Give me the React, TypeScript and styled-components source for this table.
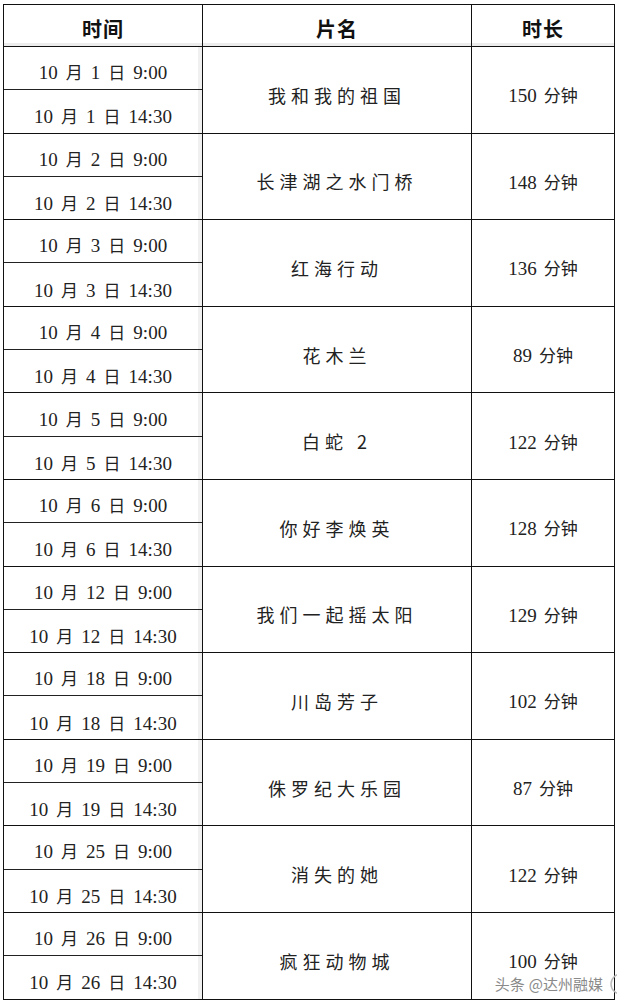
import React, { FC } from "react";
import styled, { createGlobalStyle } from "styled-components";

const GlobalStyle = createGlobalStyle`
  html, body {
    margin: 0;
    padding: 0;
    background: #ffffff;
  }
  body {
    font-family: "Liberation Serif", "Noto Sans CJK SC", serif;
    color: #222;
  }
`;

const Page = styled.div`
  position: relative;
  width: 617px;
  height: 1004px;
  padding: 4px 0 0 3px;
  box-sizing: border-box;
  overflow: hidden;
`;

const Table = styled.table`
  border-collapse: collapse;
  table-layout: fixed;
  width: 611px;
  border: 1.5px solid #111;
`;

const Col = styled.col<{ w: number }>`
  width: ${(p) => p.w}px;
`;

const HeadCell = styled.th`
  height: 42px;
  padding: 6px 0 0;
  box-sizing: border-box;
  border: 1px solid #111;
  box-shadow: inset 0 -3px 0 #ececec;
  font-family: "Noto Sans CJK SC", sans-serif;
  font-weight: 700;
  font-size: 20px;
  letter-spacing: 1px;
  color: #111;
  text-align: center;
  vertical-align: middle;
`;

const TimeCell = styled.td<{ first: boolean }>`
  height: 43.3px;
  padding: ${(p) => (p.first ? "7px" : "9px")} 0 0;
  box-sizing: border-box;
  border-left: 1px solid #111;
  border-right: 1px solid #111;
  border-top: 1px solid ${(p) => (p.first ? "#111" : "#222")};
  box-shadow: inset -4px 0 0 #f0f0f0;
  font-size: 19px;
  text-align: center;
  vertical-align: middle;
  white-space: nowrap;
`;

const Gap = styled.span<{ w?: number }>`
  display: inline-block;
  width: ${(p) => p.w ?? 8}px;
`;

const Cjk = styled.span`
  font-family: "Noto Sans CJK SC", sans-serif;
  font-size: 17px;
`;

const NameCell = styled.td`
  padding: 10px 0 0;
  border: 1px solid #111;
  font-family: "Noto Sans CJK SC", sans-serif;
  font-size: 18px;
  letter-spacing: 5px;
  text-align: center;
  vertical-align: middle;
`;

const DurCell = styled.td`
  padding: 10px 0 0;
  border: 1px solid #111;
  font-size: 19px;
  text-align: center;
  vertical-align: middle;
  white-space: nowrap;
`;

const Watermark = styled.div`
  position: absolute;
  right: 14px;
  bottom: 10px;
  display: flex;
  align-items: center;
  gap: 4px;
  font-family: "Noto Sans CJK SC", sans-serif;
  font-size: 15px;
  color: #8a8a8a;
  text-shadow: 0 0 2px #fff, 0 0 2px #fff;
`;

const Ring = styled.svg`
  position: absolute;
  right: -8px;
  bottom: 8px;
`;

interface Show {
  day: number;
  title: string;
  minutes: number;
}

const shows: Show[] = [
  { day: 1, title: "我和我的祖国", minutes: 150 },
  { day: 2, title: "长津湖之水门桥", minutes: 148 },
  { day: 3, title: "红海行动", minutes: 136 },
  { day: 4, title: "花木兰", minutes: 89 },
  { day: 5, title: "白蛇 2", minutes: 122 },
  { day: 6, title: "你好李焕英", minutes: 128 },
  { day: 12, title: "我们一起摇太阳", minutes: 129 },
  { day: 18, title: "川岛芳子", minutes: 102 },
  { day: 19, title: "侏罗纪大乐园", minutes: 87 },
  { day: 25, title: "消失的她", minutes: 122 },
  { day: 26, title: "疯狂动物城", minutes: 100 },
];

const DateText: FC<{ day: number; time: string }> = ({ day, time }) => (
  <>
    10<Gap />
    <Cjk>月</Cjk>
    <Gap />
    {day}
    <Gap />
    <Cjk>日</Cjk>
    <Gap />
    {time}
  </>
);

export default function App() {
  return (
    <Page>
      <GlobalStyle />
      <Table>
        <colgroup>
          <Col w={199} />
          <Col w={269} />
          <Col w={143} />
        </colgroup>
        <thead>
          <tr>
            <HeadCell>时间</HeadCell>
            <HeadCell>片名</HeadCell>
            <HeadCell>时长</HeadCell>
          </tr>
        </thead>
        <tbody>
          {shows.map((s) => (
            <React.Fragment key={s.day}>
              <tr>
                <TimeCell first>
                  <DateText day={s.day} time="9:00" />
                </TimeCell>
                <NameCell rowSpan={2}>{s.title}</NameCell>
                <DurCell rowSpan={2}>
                  {s.minutes}
                  <Gap w={7} />
                  <Cjk>分钟</Cjk>
                </DurCell>
              </tr>
              <tr>
                <TimeCell first={false}>
                  <DateText day={s.day} time="14:30" />
                </TimeCell>
              </tr>
            </React.Fragment>
          ))}
        </tbody>
      </Table>
      <Watermark>
        <span>头条</span>
        <span>@达州融媒</span>
      </Watermark>
      <Ring width="16" height="24" viewBox="0 0 16 24">
        <circle cx="12" cy="12" r="10" fill="none" stroke="#bbb" strokeWidth="1.5" />
      </Ring>
    </Page>
  );
}
